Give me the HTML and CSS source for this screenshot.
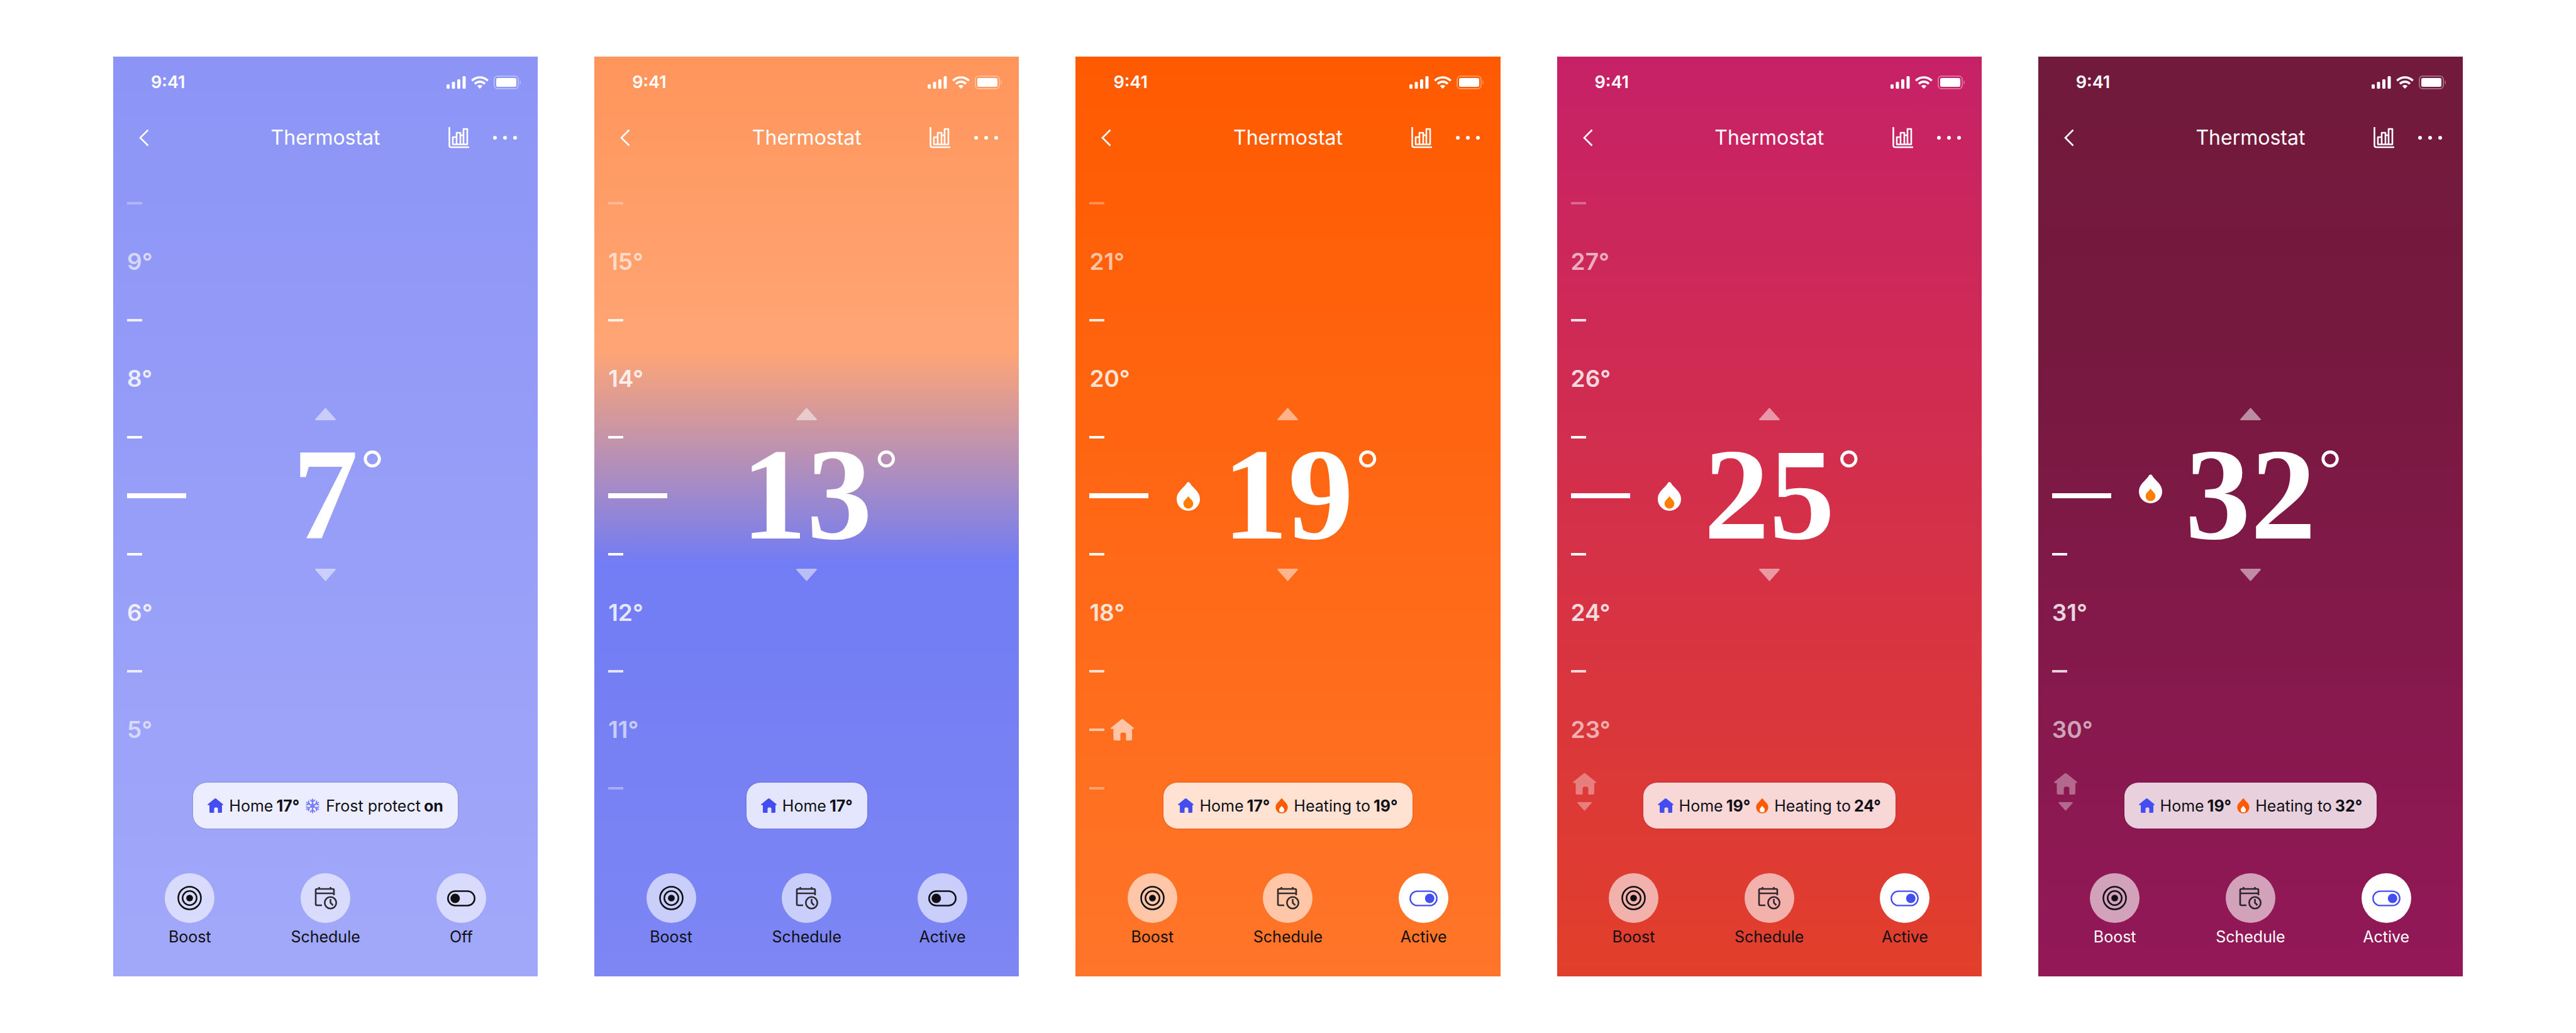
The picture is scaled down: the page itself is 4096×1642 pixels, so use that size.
FILE: index.html
```html
<!DOCTYPE html>
<html lang="en">
<head>
<meta charset="utf-8">
<title>Thermostat</title>
<link rel="stylesheet" href="styles.css">
</head>
<body>
<svg class="sprite" aria-hidden="true">
  <symbol id="signal" viewBox="0 0 31 20">
    <rect x="0" y="13" width="5" height="7" rx="1.5"/><rect x="8.500" y="9" width="5" height="11" rx="1.500"/><rect x="17" y="5" width="5" height="15" rx="1.500"/><rect x="25.500" y="0" width="5" height="20" rx="1.500"/>
  </symbol>
  <symbol id="wifi" viewBox="0 0 28 20">
    <g fill="none" stroke="currentColor" stroke-width="3.600"><path d="M1.300 7.200a18 18 0 0 1 25.400 0"/><path d="M6 12.200a11.400 11.400 0 0 1 16 0"/></g>
    <path d="M14 20l-4.200-4.300a6 6 0 0 1 8.400 0z"/>
  </symbol>
  <symbol id="battery" viewBox="0 0 44 22">
    <rect x="1" y="1" width="38" height="20" rx="5" fill="none" stroke="currentColor" stroke-width="2" opacity=".35"/><rect x="4" y="4" width="32" height="14" rx="2.500"/><path d="M41.500 7.500c2 1 2 6 0 7z" opacity=".4"/>
  </symbol>
  <symbol id="back" viewBox="0 0 16 28">
    <path d="M14.500 1.500L2 14l12.500 12.500" fill="none" stroke="currentColor" stroke-width="2.600"/>
  </symbol>
  <symbol id="chart" viewBox="0 0 34 34">
    <path d="M1.500 0v29q0 3 3 3H33M7 27.500V16h6v11.500zM13 27.500V9h6v18.500zM19 13h5M19 27.500h5M24 27.500V3h6v24.500zM7 27.500h23" fill="none" stroke="currentColor" stroke-width="2.600" stroke-linejoin="round"/>
  </symbol>
  <symbol id="dots" viewBox="0 0 38 6">
    <circle cx="3" cy="3" r="3"/><circle cx="19" cy="3" r="3"/><circle cx="35" cy="3" r="3"/>
  </symbol>
  <symbol id="house" viewBox="0 0 25 23">
    <path d="M11.300.5q1.200-.9 2.400 0l10.800 8.700q1 1-.2 1.500h-1.300v10.800q0 1.500-1.500 1.500h-5v-6.500q0-2-2-2h-2q-2 0-2 2V23h-6q-1.500 0-1.500-1.500V10.700H.7q-1.200-.5-.2-1.500z"/>
  </symbol>
  <symbol id="snow" viewBox="0 0 24 24">
    <g fill="none" stroke="currentColor" stroke-width="2" stroke-linecap="round">
      <path id="arm" d="M12 12V1.200M8.700 2.700L12 6l3.300-3.300"/>
      <use href="#arm" transform="rotate(60 12 12)"/><use href="#arm" transform="rotate(120 12 12)"/><use href="#arm" transform="rotate(180 12 12)"/><use href="#arm" transform="rotate(240 12 12)"/><use href="#arm" transform="rotate(300 12 12)"/>
    </g>
    <circle cx="12" cy="12" r="3.500"/>
  </symbol>
  <symbol id="flame" viewBox="0 0 38 47">
    <path d="M16.500 1.500Q19-1 21.500 1.500C25 9 38 15 38 28a19 19 0 0 1-38 0C0 15 13 9 16.500 1.500z"/>
    <path class="core" d="M19 23c2 4 8 7 8 12.500a8 8 0 0 1-16 0C11 30 17 27 19 23z"/>
  </symbol>
  <symbol id="up" viewBox="0 0 33 20"><path d="M16.500 0L33 18.500q0 1.500-1.500 1.500h-30Q0 20 0 18.500z"/></symbol>
  <symbol id="down" viewBox="0 0 33 20"><path d="M16.500 20L33 1.500Q33 0 31.500 0h-30Q0 0 0 1.500z"/></symbol>
  <symbol id="target" viewBox="0 0 40 40">
    <circle cx="20" cy="20" r="18.500" fill="none" stroke="currentColor" stroke-width="2.600"/><circle cx="20" cy="20" r="11.500" fill="none" stroke="currentColor" stroke-width="2.600"/><circle cx="20" cy="20" r="5.500"/>
  </symbol>
  <symbol id="calendar" viewBox="0 0 36 36">
    <path d="M12 29H4q-2 0-2-2V5q0-2 2-2h25q2 0 2 2v8M2 10h29M7.500 0v4M25.500 0v4" fill="none" stroke="currentColor" stroke-width="2.600"/>
    <circle cx="25.500" cy="25" r="9.200" fill="none" stroke="currentColor" stroke-width="2.600"/><path d="M25.500 19v6l4 4" fill="none" stroke="currentColor" stroke-width="2.600"/>
  </symbol>
  <symbol id="toggle-off" viewBox="0 0 46 26">
    <rect x="1.300" y="1.300" width="43.400" height="23.400" rx="11.700" fill="none" stroke="currentColor" stroke-width="2.600"/><circle cx="13" cy="13" r="7.700"/>
  </symbol>
  <symbol id="toggle-on" viewBox="0 0 46 26">
    <rect x="1.300" y="1.300" width="43.400" height="23.400" rx="11.700" fill="none" stroke="currentColor" stroke-width="2.400"/><circle cx="33" cy="13" r="7.700"/>
  </symbol>
</svg>
<main class="gallery" id="gallery"></main>
<script src="app.js"></script>
</body>
</html>
```
FILE: styles.css
```css
* { box-sizing: border-box; }
body { margin: 0; background: #fff; font-family: Inter, "Liberation Sans", sans-serif; }
svg { display: block; fill: currentColor; }
.sprite { position: absolute; width: 0; height: 0; }
button { border: 0; padding: 0; background: none; color: inherit; font: inherit; cursor: pointer; }

.gallery { display: grid; grid-template-columns: repeat(5, 1fr); gap: 90px; padding: 90px 180px; }
.screen { display: flex; flex-direction: column; color: #fff; }
.frost { background: linear-gradient(#8c94f6, #a2a8f9); }
.cool { background: linear-gradient(#ff955b, #ffa575 32%, #727cf4 55%, #7d86f3); }
.warm { background: linear-gradient(#ff5a00, #ff7529); }
.hot { background: linear-gradient(#c62167, #e23f2b); }
.max { background: linear-gradient(#711a3b, #76193f 32%, #931858); }

.status { display: flex; align-items: center; justify-content: space-between; height: 82px; padding: 0 26px 0 60px; }
.time { font-size: 27px; font-weight: 600; line-height: 32px; }
.indicators { display: flex; align-items: center; gap: 8px; }
.signal { width: 31px; height: 20px; }
.wifi { width: 28px; height: 20px; }
.battery { width: 44px; height: 22px; }

.bar { display: grid; grid-template-columns: minmax(0, 1fr) auto minmax(0, 1fr); align-items: center; height: 94px; padding: 0 33px; }
.bar > .back { margin-left: 8px; }
.title { margin: 0; font-size: 32px; font-weight: 400; line-height: 40px; }
.tools { display: flex; align-items: center; justify-content: flex-end; gap: 37px; }
.back { width: 16px; height: 28px; }
.chart { width: 34px; height: 34px; }
.dots { width: 38px; height: 6px; }

.stage { display: grid; grid-template-columns: 1fr; grid-template-rows: 1fr auto; margin-top: 10px; }
.scale { grid-area: 1 / 1 / 3 / 2; justify-self: start; margin: 0; padding: 0 0 18px 22px; list-style: none; font-size: 37px; font-weight: 600; }
.step { display: flex; align-items: center; gap: 10px; height: 93px; }
.tick { width: 24px; height: 4px; background: currentColor; }
.now { width: 94px; height: 8px; background: currentColor; }
.mark { width: 37px; height: 34px; }
.below { display: flex; flex-direction: column; align-items: center; gap: 12px; margin: 12px 0 0 3px; }
.below .down { width: 23px; height: 14px; }

.dial { grid-area: 1 / 1 / 3 / 2; place-self: center; display: flex; flex-direction: column; align-items: center; padding-bottom: 22px; }
.arrow { opacity: .5; }
.arrow svg { width: 33px; height: 20px; }
.value { position: relative; margin: 0; font-family: "Liberation Serif", serif; font-size: 208px; font-weight: 700; line-height: 236px; }
.deg { position: absolute; left: 100%; top: 37px; margin-left: 3px; font-family: Inter, sans-serif; font-size: 86px; font-weight: 300; line-height: 86px; }
.heat { position: absolute; right: 100%; top: 98px; width: 37px; height: 46px; margin-right: 36px; --core: #ff7d00; }
.max .heat { top: 86px; }
.core { fill: var(--core, #fff); }

.pill { grid-area: 2 / 1; justify-self: center; display: flex; align-items: center; gap: 9px; height: 73px; padding: 0 23px; border-radius: 22px; background: rgba(255, 255, 255, .8); box-shadow: 0 0 2px rgba(40, 30, 60, .4); color: #101018; font-size: 25px; line-height: 32px; }
.pill .house { width: 25px; height: 23px; color: #444df0; }
.pill .snow { width: 24px; height: 24px; color: #7a80f5; }
.pill .flame { width: 20px; height: 24px; color: #ff5a00; }
.pill p { display: flex; gap: 5px; margin: 0; }

.actions { display: grid; grid-template-columns: repeat(3, 1fr); padding: 71px 14px 43px; }
.action { display: flex; flex-direction: column; align-items: center; gap: 2px; color: #101014; font-size: 25px; line-height: 40px; }
.max .action { color: #fff; }
.disc { display: grid; place-items: center; width: 79px; height: 79px; border-radius: 50%; background: rgba(255, 255, 255, .6); color: #101014; }
.action.on .disc { background: #fff; color: #444df0; }
.target { width: 39px; height: 39px; }
.calendar { width: 36px; height: 36px; opacity: .85; }
.toggle-off, .toggle-on { width: 45px; height: 26px; }
```
FILE: app.js
```js
const icon = (name, cls = name) => `<svg class="${cls}" aria-hidden="true"><use href="#${name}"/></svg>`;
const screens = [
  { theme: 'frost', value: 7, scale: ['-', '9', '-', '8', '-', '=', '-', '6', '-', '5', ''], home: 17, extra: ['snow', 'Frost protect', 'on'], state: 'Off' },
  { theme: 'cool', value: 13, scale: ['-', '15', '-', '14', '-', '=', '-', '12', '-', '11', '-'], home: 17, state: 'Active' },
  { theme: 'warm', value: 19, heat: true, scale: ['-', '21', '-', '20', '-', '=', '-', '18', '-', 'home', '-'], home: 17, extra: ['flame', 'Heating to', '19°'], state: 'Active', on: true },
  { theme: 'hot', value: 25, heat: true, scale: ['-', '27', '-', '26', '-', '=', '-', '24', '-', '23', 'below'], home: 19, extra: ['flame', 'Heating to', '24°'], state: 'Active', on: true },
  { theme: 'max', value: 32, heat: true, scale: ['', '', '', '', '', '=', '-', '31', '-', '30', 'below'], home: 19, extra: ['flame', 'Heating to', '32°'], state: 'Active', on: true }
];
const fade = [.3, .62, .85, .82, 1, 1, 1, .82, .8, .6, .35];
const step = (s, i) => {
  const body = s === '' ? '' : s === '-' ? '<span class="tick"></span>' : s === '=' ? '<span class="now"></span>'
    : s === 'home' ? '<span class="tick"></span>' + icon('house', 'mark')
    : s === 'below' ? `<span class="below">${icon('house', 'mark')}${icon('down')}</span>` : s + '°';
  return `<li class="step" style="opacity:${fade[i]}">${body}</li>`;
};
document.getElementById('gallery').innerHTML = screens.map(s => `
  <section class="screen ${s.theme}">
    <div class="status"><span class="time">9:41</span><span class="indicators">${icon('signal')}${icon('wifi')}${icon('battery')}</span></div>
    <header class="bar">
      <button class="back" aria-label="Back">${icon('back')}</button>
      <h2 class="title">Thermostat</h2>
      <div class="tools"><button aria-label="History">${icon('chart')}</button><button aria-label="More">${icon('dots')}</button></div>
    </header>
    <div class="stage">
      <ul class="scale">${s.scale.map(step).join('')}</ul>
      <div class="dial">
        <button class="arrow" aria-label="Warmer">${icon('up')}</button>
        <p class="value">${s.heat ? icon('flame', 'heat') : ''}${s.value}<span class="deg">°</span></p>
        <button class="arrow" aria-label="Cooler">${icon('down')}</button>
      </div>
      <div class="pill">${icon('house')}<p>Home <b>${s.home}°</b></p>${s.extra ? `${icon(s.extra[0])}<p>${s.extra[1]} <b>${s.extra[2]}</b></p>` : ''}</div>
    </div>
    <nav class="actions">
      <button class="action"><span class="disc">${icon('target')}</span>Boost</button>
      <button class="action"><span class="disc">${icon('calendar')}</span>Schedule</button>
      <button class="action${s.on ? ' on' : ''}"><span class="disc">${icon(s.on ? 'toggle-on' : 'toggle-off')}</span>${s.state}</button>
    </nav>
  </section>`).join('');
```
